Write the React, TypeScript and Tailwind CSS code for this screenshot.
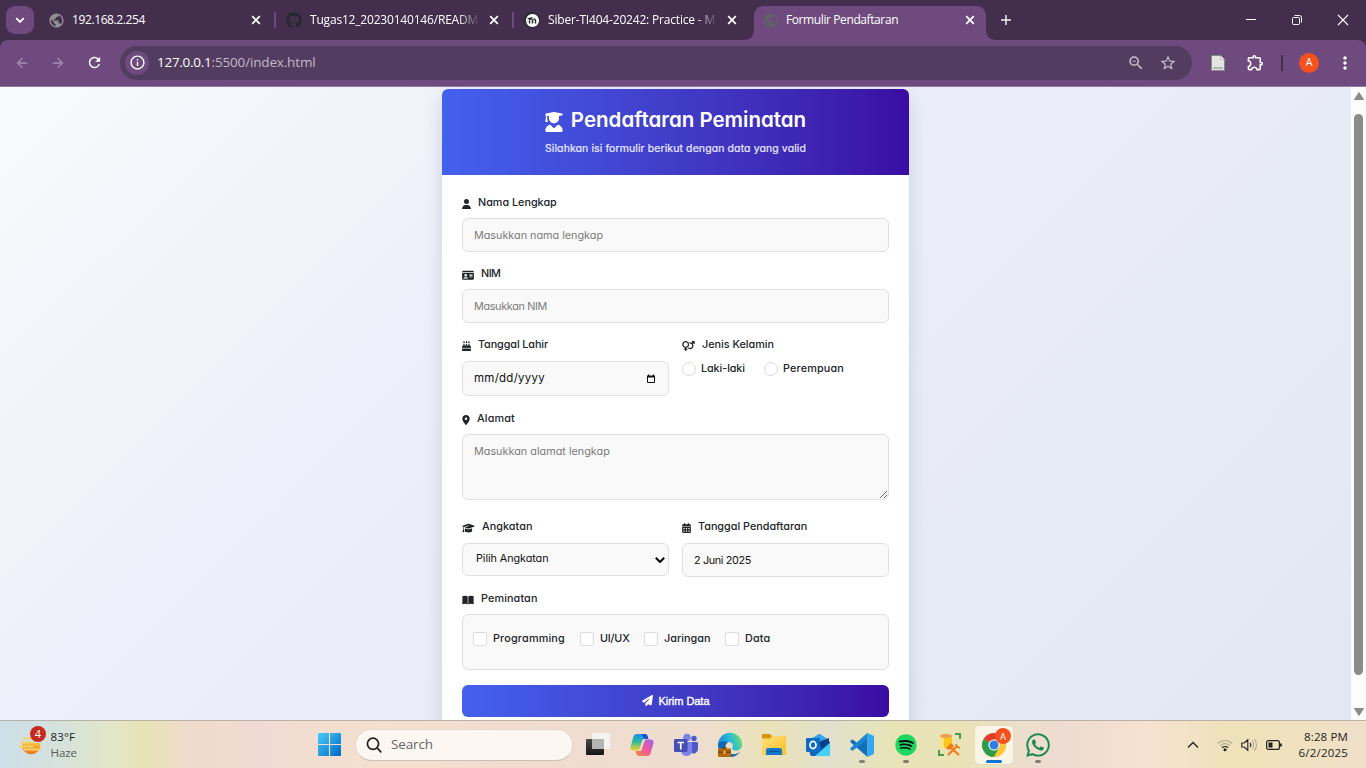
import React from "react";
import {
  FaUserGraduate, FaUser, FaIdCard, FaCakeCandles, FaVenusMars, FaLocationDot,
  FaGraduationCap, FaCalendarDays, FaBookOpen, FaPaperPlane, FaGithub, FaSpotify, FaWhatsapp,
} from "react-icons/fa6";
import {
  MdArrowBack, MdArrowForward, MdRefresh, MdInfoOutline, MdPublic, MdZoomOut,
  MdStarBorder, MdOutlineExtension, MdMoreVert,
} from "react-icons/md";
import { SiMoodle } from "react-icons/si";

const UI = "font-['Open_Sans','Noto_Sans',sans-serif]";
const FORM = "font-['Inter',sans-serif] [font-feature-settings:'cv11']";

function Cross({ className = "" }: { className?: string }) {
  return (
    <svg viewBox="0 0 12 12" className={`size-3 shrink-0 ${className}`} fill="none" stroke="currentColor" strokeWidth="1.7">
      <path d="M2.2 2.2l7.6 7.6M9.8 2.2l-7.6 7.6" />
    </svg>
  );
}

function Tab({ icon, title, tracking, active, fade, divider }: {
  icon: React.ReactNode; title: string; tracking: string; active?: boolean; fade?: boolean; divider?: boolean;
}) {
  return (
    <div className="relative flex h-10 w-[238px] shrink-0 items-center pl-[11px] text-white">
      {active && (
        <svg viewBox="0 0 252 34" className="absolute -left-[7px] top-1.5 h-[34px] w-[252px]" fill="#6e4a7e">
          <path d="M0 34c6 0 10-4 10-10V10C10 4 14 0 20 0h212c6 0 10 4 10 10v14c0 6 4 10 10 10z" />
        </svg>
      )}
      <span className="relative flex size-4 shrink-0 items-center justify-center">{icon}</span>
      <span className={`relative ml-2 w-[168px] overflow-hidden whitespace-nowrap text-xs ${tracking} ${fade ? "[mask-image:linear-gradient(to_right,#000_148px,transparent_170px)]" : ""}`}>
        {title}
      </span>
      <Cross className="relative ml-2.5" />
      {divider && <span className="ml-auto h-4 w-0.5 shrink-0 translate-x-px bg-[#6e4a7e]" />}
    </div>
  );
}

function TabStrip() {
  return (
    <div className="flex h-10 shrink-0 items-center bg-[#442e4e]">
      <button className="ml-1.5 mr-[3px] flex size-7 shrink-0 items-center justify-center rounded-[9px] bg-[#6e4a7e] text-white">
        <svg viewBox="0 0 10 10" className="size-2.5" fill="none" stroke="currentColor" strokeWidth="1.8"><path d="M1.2 3.2L5 7l3.8-3.8" /></svg>
      </button>
      <Tab divider title="192.168.2.254" tracking="tracking-[-0.39px]" icon={<MdPublic className="size-[17px] shrink-0 text-[#929092]" />} />
      <Tab divider fade title="Tugas12_20230140146/README" tracking="tracking-[-0.19px]" icon={<FaGithub className="size-4 text-[#24292e]" />} />
      <Tab fade title="Siber-TI404-20242: Practice - M" tracking="tracking-[-0.18px]"
        icon={<span className="flex size-4 items-center justify-center rounded-full bg-[#2b2e2e]"><SiMoodle className="size-[13px] text-white" /></span>} />
      <Tab active title="Formulir Pendaftaran" tracking="tracking-[-0.4px]" icon={<MdPublic className="size-[17px] shrink-0 text-[#5f6368]" />} />
      <svg viewBox="0 0 10 10" className="ml-3 size-2.5" fill="none" stroke="#eee" strokeWidth="1.5"><path d="M5 0v10M0 5h10" /></svg>
      <div className="ml-auto mr-[17px] flex items-center gap-[34px] text-white">
        <svg viewBox="0 0 12 12" className="size-3" fill="none" stroke="currentColor"><path d="M1 5.5h10" /></svg>
        <svg viewBox="0 0 12 12" className="size-3" fill="none" stroke="currentColor"><rect x="1.5" y="3.5" width="7" height="7" rx="1" /><path d="M3.5 1.5h5a2 2 0 0 1 2 2v5" /></svg>
        <svg viewBox="0 0 12 12" className="size-3" fill="none" stroke="currentColor" strokeWidth="1.1"><path d="M1 1l10 10M11 1L1 11" /></svg>
      </div>
    </div>
  );
}

function Toolbar() {
  return (
    <div className="shrink-0 bg-[#442e4e]">
      <div className="flex h-[47px] items-center rounded-t-lg border-b border-[#9479a1] bg-[#6e4a7e] pb-px pl-3.5">
        <MdArrowBack className="size-4 text-[#a78db2]" />
        <MdArrowForward className="ml-5 size-4 text-[#a78db2]" />
        <MdRefresh className="ml-5 size-[17px] text-white" />
        <div className="ml-[17px] flex h-[34px] w-[1072px] items-center rounded-full bg-[#523c60] pl-[5px]">
          <span className="flex size-6 items-center justify-center rounded-full bg-[#6e4a7e]">
            <MdInfoOutline className="size-[17px] text-white" />
          </span>
          <span className="ml-2 whitespace-nowrap text-[13.5px] tracking-[-0.27px] text-white">127.0.0.1</span>
          <span className="whitespace-nowrap text-[13.5px] tracking-[-0.16px] text-[#c3b8c9]">:5500/index.html</span>
          <MdZoomOut className="ml-auto size-[18px] text-[#c8bfcd]" />
          <MdStarBorder className="ml-3.5 mr-[15px] size-[18px] text-[#c8bfcd]" />
        </div>
        <svg viewBox="0 0 14 16" className="ml-[19px] h-4 w-3.5">
          <path d="M1 .5h8.5L13.500 4.500V15.500H.5V1z" fill="#e4e5e3" stroke="#868a80" />
          <path d="M9.500.5v4h4" fill="#fff" stroke="#a5a5a0" strokeWidth=".7" />
          <path d="M2 12h10v2H2z" fill="#b4b6b1" />
        </svg>
        <MdOutlineExtension className="ml-[21px] size-[19px] text-white" />
        <span className="ml-4 h-4 w-0.5 bg-[#442e4e]" />
        <span className="ml-4 flex size-5 items-center justify-center rounded-full bg-[#f4511e] text-[10.5px] text-white">A</span>
        <MdMoreVert className="ml-4 size-5 text-white" />
      </div>
    </div>
  );
}

function Label({ icon, text, tracking = "" }: { icon: React.ReactNode; text: string; tracking?: string }) {
  return (
    <label className={`flex h-4 items-center gap-[7px] whitespace-nowrap text-[10.8px] font-medium text-[#212529] ${tracking}`}>
      <span className="flex translate-y-px items-center">{icon}</span>
      {text}
    </label>
  );
}

const FIELD = "block w-full rounded-md border border-[#dee0e1] bg-[#f9f9f9] px-[11px] text-[10.8px] outline-none placeholder:text-[#7b7b7b]";

function Radio({ text, tracking }: { text: string; tracking: string }) {
  return (
    <span className={`flex items-center gap-[5px] text-[10.8px] font-medium text-[#212529] ${tracking}`}>
      <span className="size-3.5 rounded-full border border-[#d9dbdd] bg-white" />{text}
    </span>
  );
}

function Check({ text, tracking }: { text: string; tracking: string }) {
  return (
    <span className={`flex items-center gap-1.5 text-[10.8px] font-medium text-[#212529] ${tracking}`}>
      <span className="size-3.5 rounded-[2px] border border-[#dcdddf] bg-white" />{text}
    </span>
  );
}

function FormCard() {
  return (
    <div className={`mt-0.5 h-[660px] w-[467px] rounded-md bg-white shadow-[0_6px_18px_rgba(40,50,100,0.16)] ${FORM}`}>
      <div className="flex h-[86px] flex-col items-center rounded-t-md bg-linear-to-r from-[#4361ee] to-[#3a0ca3] pt-[17px] text-white">
        <h1 className="flex h-7 items-center gap-[8px] whitespace-nowrap text-[20.5px] font-semibold">
          <FaUserGraduate className="h-5 w-[18px] translate-y-0.5" />
          Pendaftaran Peminatan
        </h1>
        <p className="mt-[7px] h-4 whitespace-nowrap text-[10.5px] leading-4 tracking-[0.1px] text-white/85 [-webkit-text-stroke:0.2px]">
          Silahkan isi formulir berikut dengan data yang valid
        </p>
      </div>
      <form className="flex flex-col px-5 pt-5">
        <Label icon={<FaUser className="h-2.5 w-[9px]" />} text="Nama Lengkap" />
        <input className={`${FIELD} mt-[7px] h-[34px]`} placeholder="Masukkan nama lengkap" />
        <div className="mt-3.5"><Label icon={<FaIdCard className="h-[10.500px] w-3" />} text="NIM" tracking="tracking-[-0.5px]" /></div>
        <input className={`${FIELD} mt-[7px] h-[34px] placeholder:tracking-[-0.32px]`} placeholder="Masukkan NIM" />
        <div className="mt-3.5 grid grid-cols-2 gap-[13px]">
          <div>
            <Label icon={<FaCakeCandles className="h-2.5 w-[9px]" />} text="Tanggal Lahir" tracking="tracking-[-0.09px]" />
            <div className={`${FIELD} mt-2 flex! h-[35px] items-center justify-between pr-3! text-[11.5px]! tracking-[0.26px] text-[#111]`}>
              mm/dd/yyyy
              <svg viewBox="0 0 10 10" className="size-2.5"><path d="M1.500 2.500h7v6h-7z" fill="none" stroke="#111" /><path d="M1 1.500h8v2H1zM2 .5h1.200v1H2zM6.800.5H8v1H6.800z" fill="#111" /></svg>
            </div>
          </div>
          <div>
            <Label icon={<FaVenusMars className="h-2.5 w-[13px]" />} text="Jenis Kelamin" />
            <div className="mt-2 flex h-4 items-center">
              <span className="w-[82px]"><Radio text="Laki-laki" tracking="tracking-[-0.08px]" /></span>
              <Radio text="Perempuan" tracking="tracking-[0.17px]" />
            </div>
          </div>
        </div>
        <div className="mt-[15px]"><Label icon={<FaLocationDot className="h-2.5 w-2" />} text="Alamat" tracking="tracking-[0.16px]" /></div>
        <textarea className={`${FIELD} mt-[7px] h-[66px] resize-y pt-[9px] placeholder:tracking-[0.02px]`} placeholder="Masukkan alamat lengkap" />
        <div className="mt-[19px] grid grid-cols-2 gap-[13px]">
          <div>
            <Label icon={<FaGraduationCap className="h-2.5 w-[13px]" />} text="Angkatan" tracking="tracking-[0.05px]" />
            <div className={`${FIELD} mt-2 flex! h-[33px] items-center justify-between pl-[13px]! pr-[3px]! tracking-[-0.06px] text-[#111]`}>
              Pilih Angkatan
              <svg viewBox="0 0 10 6" className="h-1.5 w-2.5" fill="none" stroke="#000" strokeWidth="2"><path d="M.8.8L5 5 9.200.8" /></svg>
            </div>
          </div>
          <div>
            <Label icon={<FaCalendarDays className="h-2.5 w-[9px]" />} text="Tanggal Pendaftaran" />
            <input className={`${FIELD} mt-2 h-[34px] tracking-[-0.34px] text-[#111]`} readOnly value="2 Juni 2025" />
          </div>
        </div>
        <div className="mt-3.5"><Label icon={<FaBookOpen className="h-2.5 w-3" />} text="Peminatan" tracking="tracking-[0.12px]" /></div>
        <div className="mt-[7px] flex h-14 items-start rounded-md border border-[#dee0e1] bg-[#f9f9f9] pl-2.5 pt-4">
          <span className="w-[107px]"><Check text="Programming" tracking="tracking-[0.19px]" /></span>
          <span className="w-16"><Check text="UI/UX" tracking="tracking-[-0.19px]" /></span>
          <span className="w-[81px]"><Check text="Jaringan" tracking="tracking-[0.02px]" /></span>
          <Check text="Data" tracking="tracking-[0.19px]" />
        </div>
        <button type="button" className="mt-[15px] flex h-8 items-center justify-center gap-1.5 rounded-md bg-linear-to-r from-[#4361ee] to-[#3a0ca3] font-['Liberation_Sans',sans-serif] text-[11px] tracking-[-0.04px] text-white [-webkit-text-stroke:0.35px]">
          <FaPaperPlane className="size-[11px] -translate-y-px" />
          Kirim Data
        </button>
      </form>
    </div>
  );
}

function Scrollbar() {
  return (
    <div className="flex w-[15px] flex-col items-center bg-[#fcfcfc] pb-1 pt-[5px]">
      <svg viewBox="0 0 10 8" className="h-2 w-2.5" fill="#8b8b8b"><path d="M5 .5L9.500 7.500H.5z" stroke="#8b8b8b" strokeLinejoin="round" /></svg>
      <div className="mt-3.5 h-[561px] w-[9px] rounded-full bg-[#8b8b8b]" />
      <svg viewBox="0 0 10 8" className="mt-auto h-2 w-2.5" fill="#8b8b8b"><path d="M5 7.500L9.500.5H.5z" stroke="#8b8b8b" strokeLinejoin="round" /></svg>
    </div>
  );
}

function App11({ children, running, active }: { children: React.ReactNode; running?: boolean; active?: boolean }) {
  return (
    <div className="relative flex h-full w-11 items-center justify-center">
      <div className={`flex size-[38px] items-center justify-center rounded ${active ? "bg-[#faf5e6] shadow-[0_0_1px_#b9b08f]" : ""}`}>
        <svg viewBox="0 0 24 24" className="size-6 overflow-visible">{children}</svg>
      </div>
      {running && <span className="absolute bottom-[5px] h-[3px] w-1.5 rounded-full bg-[#857f72]" />}
      {active && <span className="absolute bottom-[5px] h-[3px] w-4 rounded-full bg-[#0a76d1]" />}
    </div>
  );
}

function Defs() {
  return (
    <svg className="absolute size-0">
      <defs>
        <linearGradient id="win" x1="0" y1="0" x2="1" y2="1"><stop stopColor="#47cdfb" /><stop offset="1" stopColor="#0067c6" /></linearGradient>
        <linearGradient id="cpA" x1="0" y1="0" x2="0" y2="1"><stop stopColor="#1b8ff2" /><stop offset=".45" stopColor="#2bb9a0" /><stop offset="1" stopColor="#f5cf25" /></linearGradient>
        <linearGradient id="cpB" x1="1" y1="0" x2="0" y2="1"><stop stopColor="#9e63f0" /><stop offset=".5" stopColor="#ef5a9d" /><stop offset="1" stopColor="#fb8a3c" /></linearGradient>
        <linearGradient id="edge" x1="0" y1=".5" x2="1" y2=".2"><stop stopColor="#1583d8" /><stop offset=".5" stopColor="#29bcd9" /><stop offset="1" stopColor="#6ee25f" /></linearGradient>
        <linearGradient id="folder" x1="0" y1="0" x2="1" y2="1"><stop stopColor="#ffe17a" /><stop offset="1" stopColor="#fbbf25" /></linearGradient>
        <linearGradient id="sun" x1="0" y1="0" x2="0" y2="1"><stop stopColor="#f7c33a" /><stop offset="1" stopColor="#ee7414" /></linearGradient>
        <linearGradient id="tv1" x1="0" y1="0" x2="0" y2="1"><stop stopColor="#4a4a4a" /><stop offset="1" stopColor="#151515" /></linearGradient>
      </defs>
    </svg>
  );
}

function Taskbar() {
  return (
    <div className="relative flex h-12 shrink-0 items-stretch border-t border-[#b8b1a6] bg-[linear-gradient(to_right,#cddfe8_0px,#d5e2dc_60px,#e2e6c8_110px,#e8e3b8_145px,#ecdfc0_172px,#f0dccb_180px,#efdbd4_260px,#f3dfd0_330px,#f3e0d0_400px,#f0dcd1_560px,#eedecf_700px,#eae2b8_770px,#e2dfcc_830px,#e8e4b8_890px,#e9e3b6_960px,#ecdfcb_1020px,#eedbd2_1060px,#f5e2d0_1150px,#efe2ba_1230px,#f0e2bd_1280px,#f0dfcb_1366px)] text-[#1d1d1d]">
      <Defs />
      <div className="flex w-[313px] items-center pl-[19px]">
        <div className="relative flex h-full w-[31.500px] items-center">
          <svg viewBox="0 0 24 24" className="size-6">
            <path d="M3 10h18.500v2A9 9 0 0 1 3 12z" fill="url(#sun)" />
            <path d="M4 5.500h10M2 9.500h13M0 13.500h14M5 16.500h17" stroke="#f9d270" strokeWidth="1.800" />
          </svg>
          <span className="absolute left-[11px] top-[5px] flex size-4 items-center justify-center rounded-full bg-[#c42b1c] text-[11px] text-white">4</span>
        </div>
        <div className="text-[11.500px] leading-4">
          <div className="tracking-[0.12px]">83°F</div>
          <div className="tracking-[-0.05px] text-[#5b5b56]">Haze</div>
        </div>
      </div>
      <div className="flex w-[42px] items-center pl-[5px]">
        <svg viewBox="0 0 24 24" className="size-[23px]" fill="url(#win)">
          <path d="M1 0h10.400v11.400H0V1a1 1 0 0 1 1-1zM12.600 0H23a1 1 0 0 1 1 1v10.400H12.600zM0 12.600h11.400V24H1a1 1 0 0 1-1-1zM12.600 12.600H24V23a1 1 0 0 1-1 1H12.600z" />
        </svg>
      </div>
      <div className="my-auto mr-[3px] flex h-8 w-[218px] items-center rounded-full border border-[#e5d6cc] border-b-[#cdbfb6] bg-[#fdf7f2] pl-2.5">
        <svg viewBox="0 0 16 16" className="size-4" fill="none" stroke="#1f1f1f" strokeWidth="1.700" strokeLinecap="round"><circle cx="7" cy="6.800" r="5.600" /><path d="M11.200 11l3.600 3.900" /></svg>
        <span className="ml-[9px] text-[13.500px] tracking-[-0.12px] text-[#666]">Search</span>
      </div>
      <App11>
        <rect x="0" y="6" width="18" height="16" rx="1" fill="url(#tv1)" />
        <rect x="6" y="0" width="18" height="16" rx="1" fill="#f3f3f3" />
        <path d="M6 6h12v10H6z" fill="#b4b4b2" />
      </App11>
      <App11>
        <path d="M7 1h8c1.500 0 2.200 1 2.600 2.200l.8 2.800h-4c-1.500 0-2 .8-2.500 2.300l-2 7C9.300 17 8.400 17.500 7 17.500H3.500C1 17.500 0 15.800.6 13.500L3.500 3.500C4 2 5 1 7 1z" fill="url(#cpA)" />
        <path d="M7 1h8c1.500 0 2.200 1 2.600 2.200l.8 2.800H14L11.500 1z" fill="#1b4fd6" />
        <path d="M17 23H9c-1.500 0-2.200-1-2.600-2.200L5.600 18h4c1.500 0 2-.8 2.500-2.300l2-7c.6-1.700 1.500-2.200 2.900-2.200h3.500c2.500 0 3.500 1.700 2.900 4l-2.900 10C20 22 19 23 17 23z" fill="url(#cpB)" />
      </App11>
      <App11>
        <circle cx="13" cy="4.500" r="3.800" fill="#7b83eb" /><circle cx="20" cy="5.500" r="2.700" fill="#5059c9" />
        <path d="M15 9h8a1 1 0 0 1 1 1v6a4.500 4.500 0 0 1-7 3.800z" fill="#5059c9" />
        <path d="M7 9h11v8.500a5.500 5.500 0 0 1-11 0z" fill="#7b83eb" />
        <rect x="0" y="6" width="13.500" height="13" rx="1.200" fill="#464eb8" />
        <path d="M3.500 9.500h6.500M6.750 9.500v7" stroke="#fff" strokeWidth="1.700" />
      </App11>
      <App11>
        <path d="M0 12a12 12 0 0 1 24-.5c0 4-3 6-6 6-3.500 0-4.500-1.600-3.500-3 1-1.500.5-5.500-4-5.500C5 9 1 10 0 14z" fill="url(#edge)" />
        <path d="M0 12C2 8 7 7.500 10 9.500c-4 2-3.500 9.500 4 11.500 3 .6 6-.5 8-2a12 12 0 0 1-10 5A12 12 0 0 1 0 12z" fill="#1267b5" />
        <rect x="0" y="15.500" width="13" height="8.500" rx="1" fill="#b8680d" /><path d="M0 18.500h13v1.200H0zM4 15.500c0-2 5-2 5 0" fill="#6d3d08" /><path d="M5.500 18h2v2.500h-2z" fill="#ffd34e" />
      </App11>
      <App11>
        <path d="M0 2a1 1 0 0 1 1-1h7l2 2-2 3H0z" fill="#d9930c" />
        <path d="M0 5.500h9L11 3h12a1 1 0 0 1 1 1v17a1 1 0 0 1-1 1H1a1 1 0 0 1-1-1z" fill="url(#folder)" />
        <path d="M4 22v-5a2 2 0 0 1 2-2h12a2 2 0 0 1 2 2v5z" fill="#1279cf" /><path d="M7 18.500h10" stroke="#0b5296" strokeWidth="1.500" />
      </App11>
      <App11>
        <path d="M2 9L13 1l11 8v13a1 1 0 0 1-1 1H6a2 2 0 0 1-2-2z" fill="#1066b5" />
        <path d="M6 5l8-4 9 6-9 8z" fill="#35a5ee" /><path d="M13 9l10-4v5l-8 6z" fill="#0a3f87" />
        <path d="M24 10v12a1 1 0 0 1-1 1H9z" fill="#45d0f7" />
        <rect x="0" y="5" width="14" height="14" rx="1.200" fill="#0f6cc4" /><ellipse cx="7" cy="12" rx="3" ry="3.600" fill="none" stroke="#fff" strokeWidth="1.700" />
      </App11>
      <App11 running>
        <path d="M17.500 0L7 9.800 2.600 6.500.5 7.500v1.800L17.500 24z" fill="#0f6fb8" />
        <path d="M17.500 0L.5 15v1.800l2.100 1L7 14.500 17.500 6z" fill="#1b87d3" />
        <path d="M17.500 0L24 3v18l-6.500 3z" fill="#35a7f0" />
      </App11>
      <App11 running>
        <circle cx="12" cy="12" r="10" fill="#111" /><FaSpotify x="1" y="1" width="22" height="22" size={22} color="#1ed760" />
      </App11>
      <App11>
        <path d="M2 3v10c0 2.500 12 2.500 12 0V3z" fill="#fcc81b" /><path d="M2 3v10c0 1 2 1.800 4 1.900V3z" fill="#ffe27a" /><ellipse cx="8" cy="3" rx="6" ry="2.200" fill="#eda052" />
        <path d="M17 1h5v5M1 17v5h5" stroke="#4a9a4a" strokeWidth="2" fill="none" />
        <path d="M10 22l9-9M21 22l-9-8" stroke="#ee7b18" strokeWidth="2.200" /><path d="M9 15l4-4 2 2-4 3zM18 11l1 3 3 1" stroke="#ee7b18" strokeWidth="1.500" fill="#ee7b18" />
      </App11>
      <App11 active>
        <circle cx="12" cy="12" r="12" fill="#fcc934" />
        <path d="M12 12L1.600 6a12 12 0 0 1 20.800 0z" fill="#e33b2e" />
        <path d="M1.600 6a12 12 0 0 0 10.400 18l5.200-9L12 12z" fill="#2c9e4b" />
        <path d="M12 6.600h10.700A12 12 0 0 1 12 24l5-9z" fill="#fcc934" />
        <circle cx="12" cy="12" r="5.600" fill="#fff" /><circle cx="12" cy="12" r="4.500" fill="#2f7de9" />
        <circle cx="21" cy="3" r="8" fill="#f4511e" />
        <text x="21" y="6.500" textAnchor="middle" fontSize="9.500" fill="#fff" fontFamily="Open Sans">A</text>
      </App11>
      <App11 running>
        <FaWhatsapp x="-1.500" y="-1.500" size={27} color="#1a8a50" />
      </App11>
      <div className="ml-auto flex items-center pr-[18px]">
        <svg viewBox="0 0 12 8" className="h-2 w-3" fill="none" stroke="#222" strokeWidth="1.300"><path d="M1 6.500l5-5 5 5" /></svg>
        <svg viewBox="0 0 16 14" className="ml-[18px] h-3.5 w-4" fill="none" strokeWidth="1.200">
          <path d="M.8 5.500a10.200 10.200 0 0 1 14.400 0M3 7.800a7 7 0 0 1 10 0" stroke="#b5ad94" />
          <path d="M5 9.800a4.300 4.300 0 0 1 6 0" stroke="#222" /><circle cx="8" cy="11.800" r="1.500" fill="#222" />
        </svg>
        <svg viewBox="0 0 16 14" className="ml-2 h-3.5 w-4" fill="none" strokeWidth="1.100">
          <path d="M.8 5v4h2.400l3.600 3.200V1.800L3.200 5zM9 5a3 3 0 0 1 0 4" stroke="#222" />
          <path d="M11 3a5.500 5.500 0 0 1 0 8M13.200 1.200a8.500 8.500 0 0 1 0 11.600" stroke="#b5ad94" />
        </svg>
        <svg viewBox="0 0 16 10" className="ml-[9px] h-2.5 w-4" fill="none" stroke="#222" strokeWidth="1.200"><rect x=".6" y=".6" width="12.800" height="8.800" rx="2" /><path d="M14.800 3.500v3" strokeWidth="2" /><path d="M2.500 2.500h4v5h-4z" fill="#222" stroke="none" /></svg>
        <div className="ml-4 w-[50px] whitespace-nowrap text-right text-[11.500px] leading-4">
          <div className="tracking-[0.14px]">8:28 PM</div>
          <div className="tracking-[0.2px]">6/2/2025</div>
        </div>
      </div>
    </div>
  );
}

export default function App() {
  return (
    <div className={`flex h-[768px] w-[1366px] flex-col overflow-hidden ${UI}`}>
      <TabStrip />
      <Toolbar />
      <main className="flex min-h-0 flex-1 overflow-hidden">
        <div className="flex flex-1 justify-center bg-[linear-gradient(135deg,#f8fafb_0%,#edf0fa_32%,#e9ecf7_60%,#e3e7f4_100%)]">
          <FormCard />
        </div>
        <Scrollbar />
      </main>
      <Taskbar />
    </div>
  );
}
